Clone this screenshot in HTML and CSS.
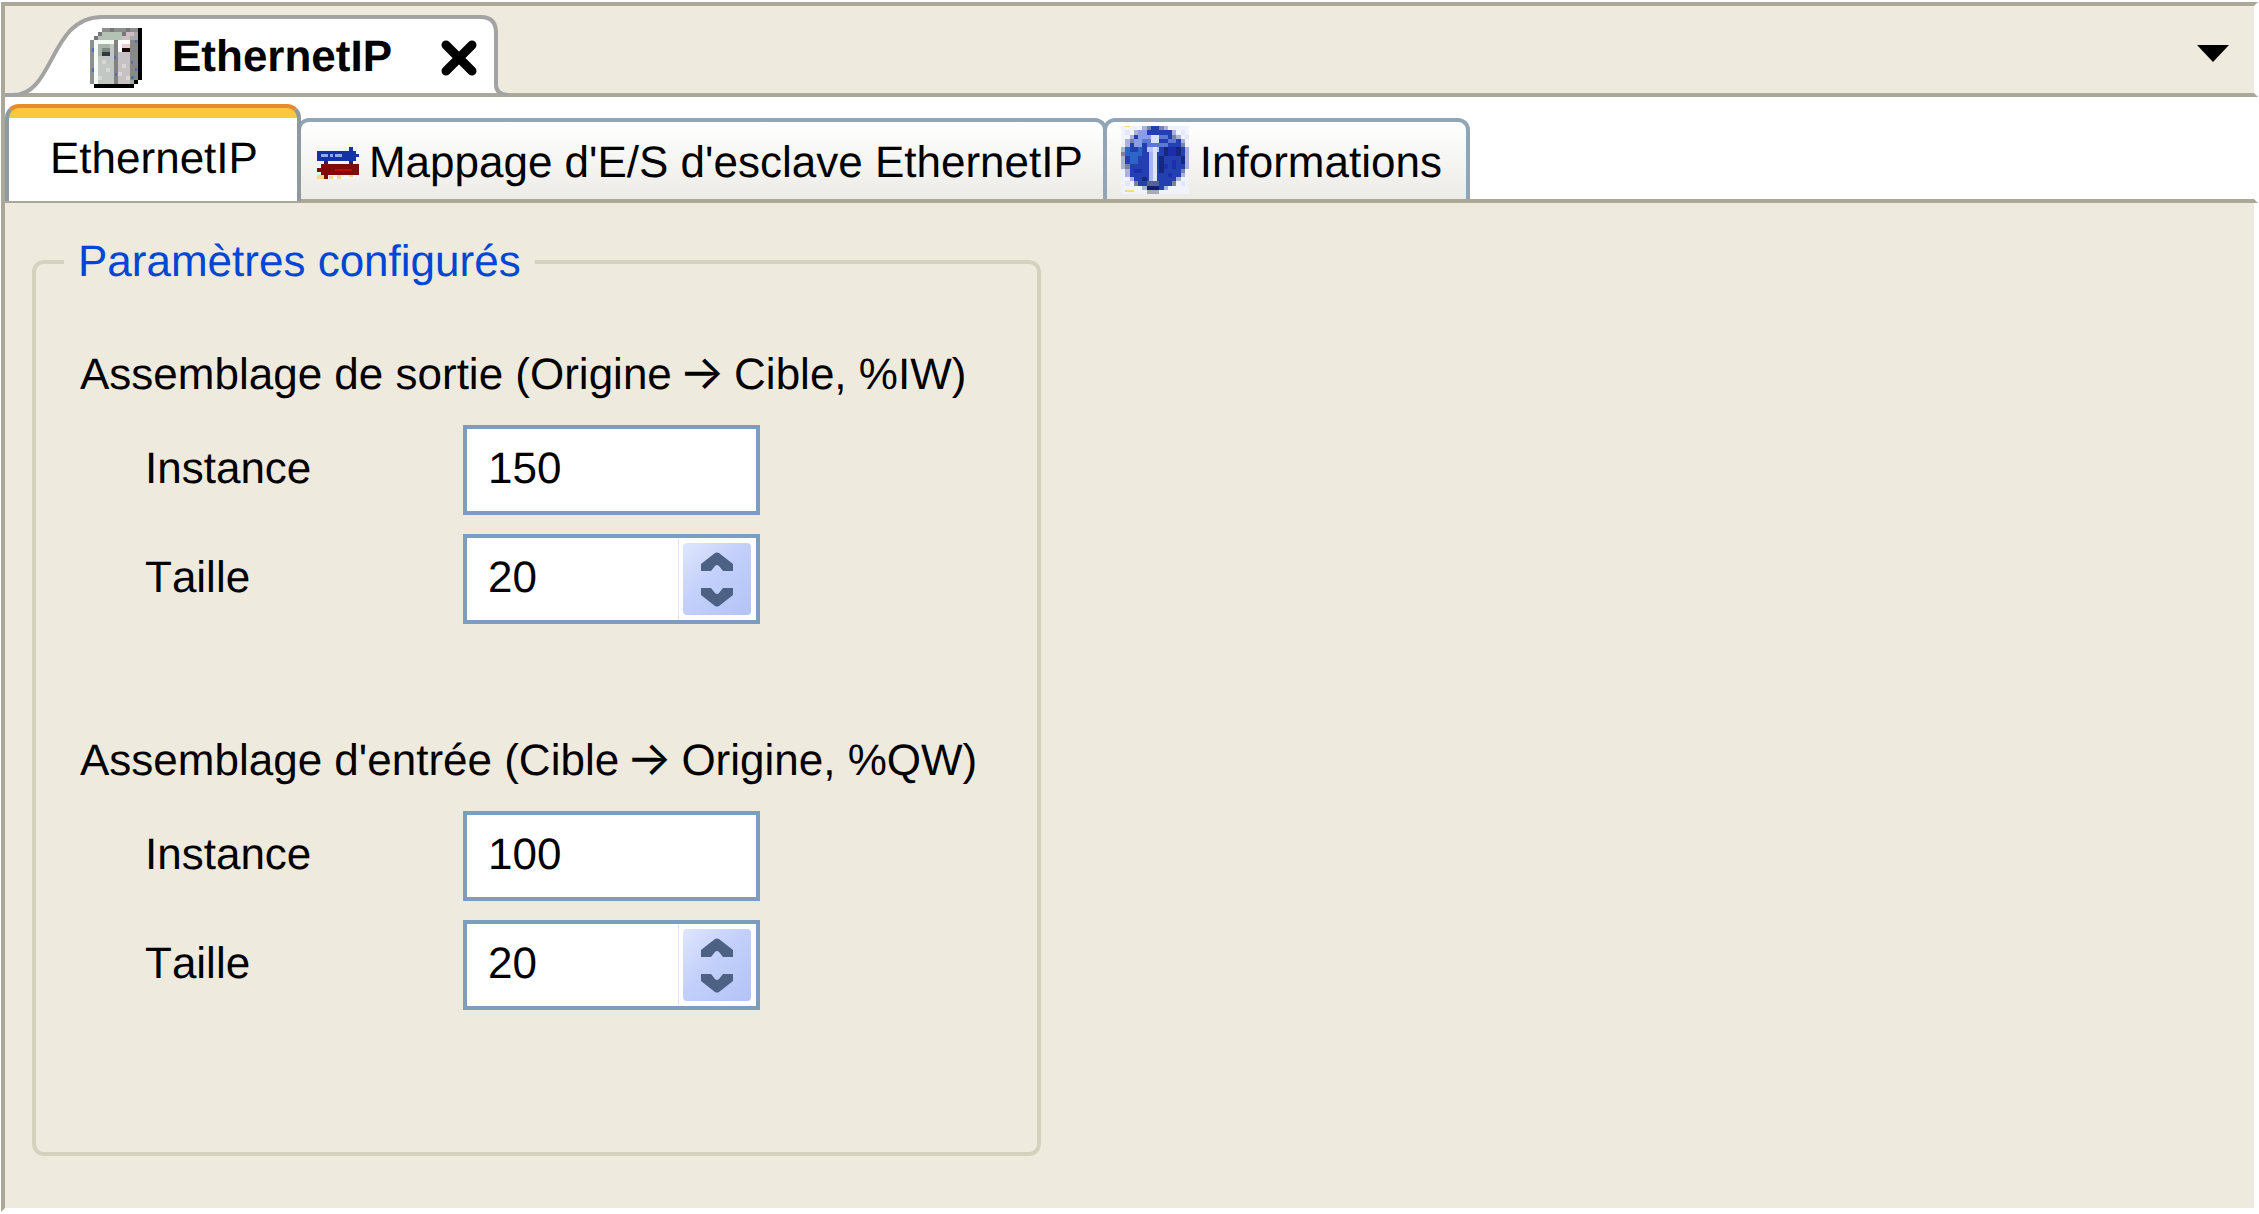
FILE: index.html
```html
<!DOCTYPE html>
<html lang="fr">
<head>
<meta charset="utf-8">
<title>EthernetIP</title>
<link rel="stylesheet" href="styles.css">
</head>
<body>
<div class="window">
  <header class="docbar">
    <div class="doctab">
      <svg class="doctab-shape" width="504" height="91" viewBox="0 0 504 91" aria-hidden="true">
        <path d="M0 87H16C50 80 47 10 97 10H478Q491 10 491 26V87Z" fill="#fff"/>
        <path d="M0 89H8C50 89 44 11 97 11H476Q491 11 491 27V79Q491 88 503 89" fill="none" stroke="#a3a3a3" stroke-width="4"/>
      </svg>
      <svg class="device-icon" width="52" height="61" viewBox="30 37 156 182" shape-rendering="crispEdges" aria-hidden="true">
        <path d="M66 38H175V195H162V207H42V207H31V75H42V63H54V51H66Z" fill="#aaa9a9"/>
        <path d="M66 51H138V63H150V75H42V63H54Z" fill="#b3c2b4"/>
        <path d="M66 38H175V51H66Z" fill="#8d8f8e"/>
        <path d="M90 38h12v12H90zM138 38h12v12h-12zM42 63h12v12H42zM54 51h12v12H54zM126 51h12v12h-12z" fill="#777"/>
        <path d="M138 51h24v12h-24zM126 63h24v12h-24z" fill="#cdbfc3"/>
        <path d="M150 75h25v120h-25z" fill="#888"/>
        <path d="M42 75h60v132H42z" fill="#c3c7c4"/>
        <path d="M42 75h60v12H54v120H42z" fill="#f4fbf4"/>
        <path d="M31 75h11v132H31z" fill="#8c908f"/>
        <path d="M54 87h36v37H54z" fill="#a5b4a7"/>
        <path d="M66 99h24v12H66z" fill="#7e8980"/>
        <path d="M66 111h24v12H66z" fill="#303942"/>
        <path d="M102 75h12v132h-12z" fill="#828282"/>
        <path d="M114 75h36v132h-36z" fill="#c6c1c3"/>
        <path d="M114 75h36v12h-24v24h-12z" fill="#fff"/>
        <path d="M126 87h24v12h-24z" fill="#e7cdd0"/>
        <path d="M126 99h24v12h-24z" fill="#190707"/>
        <path d="M66 135h12v12H66zM78 159h12v12H78zM54 183h12v12H54zM126 147h12v12h-12zM114 171h12v12h-12zM138 183h12v12h-12z" fill="#d8d6d8"/>
        <path d="M36 99h6v12h-6zM36 159h6v12h-6zM102 123h6v8h-6zM104 175h8v8h-8zM152 139h8v8h-8zM164 159h8v8h-8zM154 183h8v8h-8zM164 75h8v8h-8z" fill="#536fb0"/>
        <path d="M175 38h12v157h-12zM162 195h13v12h-13zM42 207h120v12H42z" fill="#000"/>
      </svg>
      <span class="doctab-title">EthernetIP</span>
      <button class="close" type="button" aria-label="Fermer">
        <svg width="36" height="36" viewBox="0 0 36 36" aria-hidden="true"><path d="M5 5L31 31M31 5L5 31" stroke="#000" stroke-width="9" stroke-linecap="round"/></svg>
      </button>
    </div>
    <button class="doc-menu" type="button" aria-label="Liste des documents">
      <svg width="32" height="17" viewBox="0 0 32 17" aria-hidden="true"><path d="M0 0H32L16 17Z"/></svg>
    </button>
  </header>

  <nav class="tabs" role="tablist">
    <button class="tab tab-active" type="button" role="tab" aria-selected="true">EthernetIP</button>
    <button class="tab tab-mapping" type="button" role="tab" aria-selected="false">
      <svg width="42" height="32" viewBox="0 0 126 96" shape-rendering="crispEdges" aria-hidden="true">
        <path d="M0 0h126v96H0z" fill="#f3f5fb"/>
        <path d="M0 84h25v12H0zM36 88h12v8H36zM60 84h12v12H60zM96 84h12v6H96z" fill="#fbd98c"/>
        <path d="M0 11H95V0h12v11h10v10h9v10h-9v11H0z" fill="#1432a8"/>
        <path d="M12 21h22v8H12zM39 21h10v8H39zM54 21h20v8H54z" fill="#8fa9f5"/>
        <path d="M22 42h10v10H22zM95 42h12v10H95z" fill="#2b2860"/>
        <path d="M12 52h114v32H33v12H22V84H12V74H0V64h12z" fill="#7e0a0a"/>
        <path d="M54 66h52v6H54z" fill="#bd0b0b"/>
      </svg>
      <span>Mappage d'E/S d'esclave EthernetIP</span>
    </button>
    <button class="tab tab-info" type="button" role="tab" aria-selected="false">
      <svg width="68" height="68" viewBox="0 0 16 16" shape-rendering="crispEdges" aria-hidden="true">
        <path d="M0 0h16v16H0z" fill="#f1f3fc"/>
        <path d="M5 0h6v1h2v1h1v1h1v2h1v5h-1v2h-1v1h-1v1h-2v1h-2v1H7v-1H5v-1H3v-1H2v-1H1v-2H0V5h1V3h1V2h1V1h2z" fill="#a9b3d8"/>
        <path d="M6 0h4v1h2v1h1v1h1v2h1v5h-1v2h-1v1h-1v1h-2v1H6v-1H4v-1H3v-1H2v-2H1V5h1V3h1V2h1V1h2z" fill="#2440b0"/>
        <path d="M4 1h2v1h1v2H5v1H3V3h1z" fill="#8c9de8"/>
        <path d="M5 3h2v1H5zM9 2h2v1H9zM11 3h2v1h-2zM6 4h5v1H6z" fill="#5b79d2"/>
        <path d="M1 5h1v2H1zM2 6h2v3H2zM4 5h1v2H4z" fill="#2c64c8"/>
        <path d="M10 5h1v2h-1zM13 5h1v2h-1zM9 7h1v4H9zM14 7h1v2h-1zM5 12h1v1H5z" fill="#16277e"/>
        <path d="M11 5h2v2h-2zM12 8h1v2h-1zM10 9h1v1h-1zM3 10h2v1H3zM11 11h1v1h-1z" fill="#1b2fae"/>
        <path d="M6 0h1v1H6zM9 0h1v1H9zM12 2h1v1h-1zM2 3h1v1H2zM14 4h1v1h-1zM0 6h1v1H0zM1 9h1v1H1zM14 10h1v1h-1zM3 13h1v1H3zM12 13h1v1h-1z" fill="#7b82a2"/>
        <path d="M7 2h2v2H7z" fill="#d9e0fb"/>
        <path d="M6 5h3v1H6z" fill="#b9c6f4"/>
        <path d="M6.500 6h1v7h-1z" fill="#a9b5ee"/>
        <path d="M7.500 5h1v8h-1z" fill="#dfe4f8"/>
        <path d="M6 13h3v1H6z" fill="#57629a"/>
        <path d="M6 14h3v1H6z" fill="#12206c"/>
        <path d="M6 15h3v1H6z" fill="#a5a9b8"/>
        <path d="M1 1h1v1H1zM14 1h1v1h-1zM15 2h1v1h-1zM14 13h1v1h-1zM1 13h1v1H1z" fill="#e3e8f8"/>
        <path d="M1 15h2v.5H1zM1 0h1v.3H1z" fill="#f7d98a"/>
      </svg>
      <span>Informations</span>
    </button>
  </nav>

  <main class="panel">
    <fieldset class="group">
      <legend>Paramètres configurés</legend>
      <section class="assembly">
        <h2>Assemblage de sortie (Origine <span class="arrow">→</span> Cible, %IW)</h2>
        <div class="row">
          <label for="out-instance">Instance</label>
          <div class="field"><input id="out-instance" type="text" value="150"></div>
        </div>
        <div class="row">
          <label for="out-size">Taille</label>
          <div class="field">
            <input id="out-size" type="text" inputmode="numeric" value="20">
            <div class="stepper">
              <button type="button" aria-label="Augmenter"><svg width="32" height="19" viewBox="0 0 32 19" aria-hidden="true"><path d="M0 12L14 1Q16 0 18 1L32 12V19H22L18 14Q16 12 14 14L10 19H0Z"/></svg></button>
              <button type="button" aria-label="Diminuer"><svg width="32" height="19" viewBox="0 0 32 19" aria-hidden="true"><path d="M0 7L14 18Q16 19 18 18L32 7V0H22L18 5Q16 7 14 5L10 0H0Z"/></svg></button>
            </div>
          </div>
        </div>
      </section>
      <section class="assembly">
        <h2>Assemblage d'entrée (Cible <span class="arrow">→</span> Origine, %QW)</h2>
        <div class="row">
          <label for="in-instance">Instance</label>
          <div class="field"><input id="in-instance" type="text" value="100"></div>
        </div>
        <div class="row">
          <label for="in-size">Taille</label>
          <div class="field">
            <input id="in-size" type="text" inputmode="numeric" value="20">
            <div class="stepper">
              <button type="button" aria-label="Augmenter"><svg width="32" height="19" viewBox="0 0 32 19" aria-hidden="true"><path d="M0 12L14 1Q16 0 18 1L32 12V19H22L18 14Q16 12 14 14L10 19H0Z"/></svg></button>
              <button type="button" aria-label="Diminuer"><svg width="32" height="19" viewBox="0 0 32 19" aria-hidden="true"><path d="M0 7L14 18Q16 19 18 18L32 7V0H22L18 5Q16 7 14 5L10 0H0Z"/></svg></button>
            </div>
          </div>
        </div>
      </section>
    </fieldset>
  </main>
</div>
</body>
</html>
```
FILE: styles.css
```css
* {
  box-sizing: border-box;
}

body {
  margin: 0;
  background: #fff;
  color: #000;
  font: 44px/50px "Liberation Sans", Arial, sans-serif;
  font-kerning: none;
  text-rendering: geometricPrecision;
}

button,
input {
  margin: 0;
  padding: 0;
  border: 0;
  background: none;
  color: inherit;
  font: inherit;
  font-kerning: none;
  text-rendering: inherit;
}

svg {
  display: block;
  flex: none;
}

.window {
  display: flex;
  flex-direction: column;
  min-height: 100vh;
  padding: 2px 1px;
}

/* Document bar */
.docbar {
  display: flex;
  justify-content: space-between;
  align-items: flex-start;
  height: 95px;
  border: 4px solid #aca899;
  border-right-color: #fff;
  background: #eeeade;
}

.doctab {
  position: relative;
  display: flex;
  align-items: center;
  height: 87px;
  padding: 0 0 0 85px;
}

.doctab-shape {
  position: absolute;
  top: 0;
  left: 0;
}

.device-icon {
  position: relative;
  margin-top: 15px;
}

.doctab-title {
  position: relative;
  width: 299px;
  padding: 15px 0 0 30px;
  font-weight: bold;
}

.close {
  position: relative;
  height: 68px;
  padding-top: 16px;
}

.doc-menu {
  padding: 39px 25px 24px;
}

/* Editor tabs */
.tabs {
  display: flex;
  align-items: flex-end;
  height: 106px;
  border: 4px solid #aca899;
  border-top: 0;
  border-right-color: #fff;
  background: #fff;
}

.tab {
  display: flex;
  align-items: center;
  height: 81px;
  margin-left: -4px;
  border: 4px solid #90a5b6;
  border-bottom: 0;
  border-radius: 12px 12px 0 0;
  background: linear-gradient(#fff, #f8f8f6 35%, #ecebe6);
  white-space: nowrap;
}

.tab-active {
  position: relative;
  height: 97px;
  margin: 0 0 -2px;
  padding: 8px 39px 0 41px;
  border-color: #e78b2d #8f9a9e #8f9a9e;
  border-radius: 14px 14px 0 0;
  background: linear-gradient(#ffc83c 10px, #fff 10px);
}

.tab-mapping {
  gap: 10px;
  padding: 4px 20px 0 16px;
}

.tab-info {
  gap: 11px;
  padding: 4px 24px 0 14px;
}

.tab-info svg {
  margin-bottom: 6px;
}

/* Parameter panel */
.panel {
  flex: 1;
  padding: 34px 27px 50px;
  border: 4px solid #aca899;
  border-top: 0;
  border-right-color: #fff;
  border-bottom-color: #fff;
  background: #eeeade;
}

.group {
  width: fit-content;
  margin: 0;
  padding: 63px 60px 142px 44px;
  border: 4px solid #d4d2be;
  border-radius: 12px;
}

.group legend {
  margin-left: -16px;
  padding: 0 14px;
  color: #0046d5;
}

.assembly {
  display: flex;
  flex-direction: column;
  gap: 19px;
}

.assembly + .assembly {
  margin-top: 112px;
}

.assembly h2 {
  margin: 0 0 6px;
  font-size: 44px;
  font-weight: normal;
  white-space: nowrap;
}

.arrow {
  margin: 0 -3px 0 -5px;
  font-family: Inter, "DejaVu Sans", sans-serif;
  font-size: 48px;
  line-height: 0;
}

.row {
  display: flex;
  align-items: center;
  padding-left: 65px;
}

.row label {
  width: 318px;
  padding-bottom: 3px;
}

.field {
  display: flex;
  width: 297px;
  height: 90px;
  border: 4px solid #7a9dc0;
  background: #fff;
}

.field input {
  flex: 1;
  min-width: 0;
  padding: 0 0 3px 21px;
  outline: 0;
}

.field input:not(:only-child) {
  border-right: 1px solid #e3e3fb;
}

.stepper {
  display: flex;
  flex-direction: column;
  justify-content: center;
  gap: 17px;
  width: 68px;
  margin: 5px 5px 5px 4px;
  border-radius: 4px;
  background: linear-gradient(135deg, #dfe6fd, #c3d0fb 45%, #b3c3f5);
}

.stepper button {
  display: flex;
  justify-content: center;
}

.stepper svg {
  fill: #4d6185;
}
```
